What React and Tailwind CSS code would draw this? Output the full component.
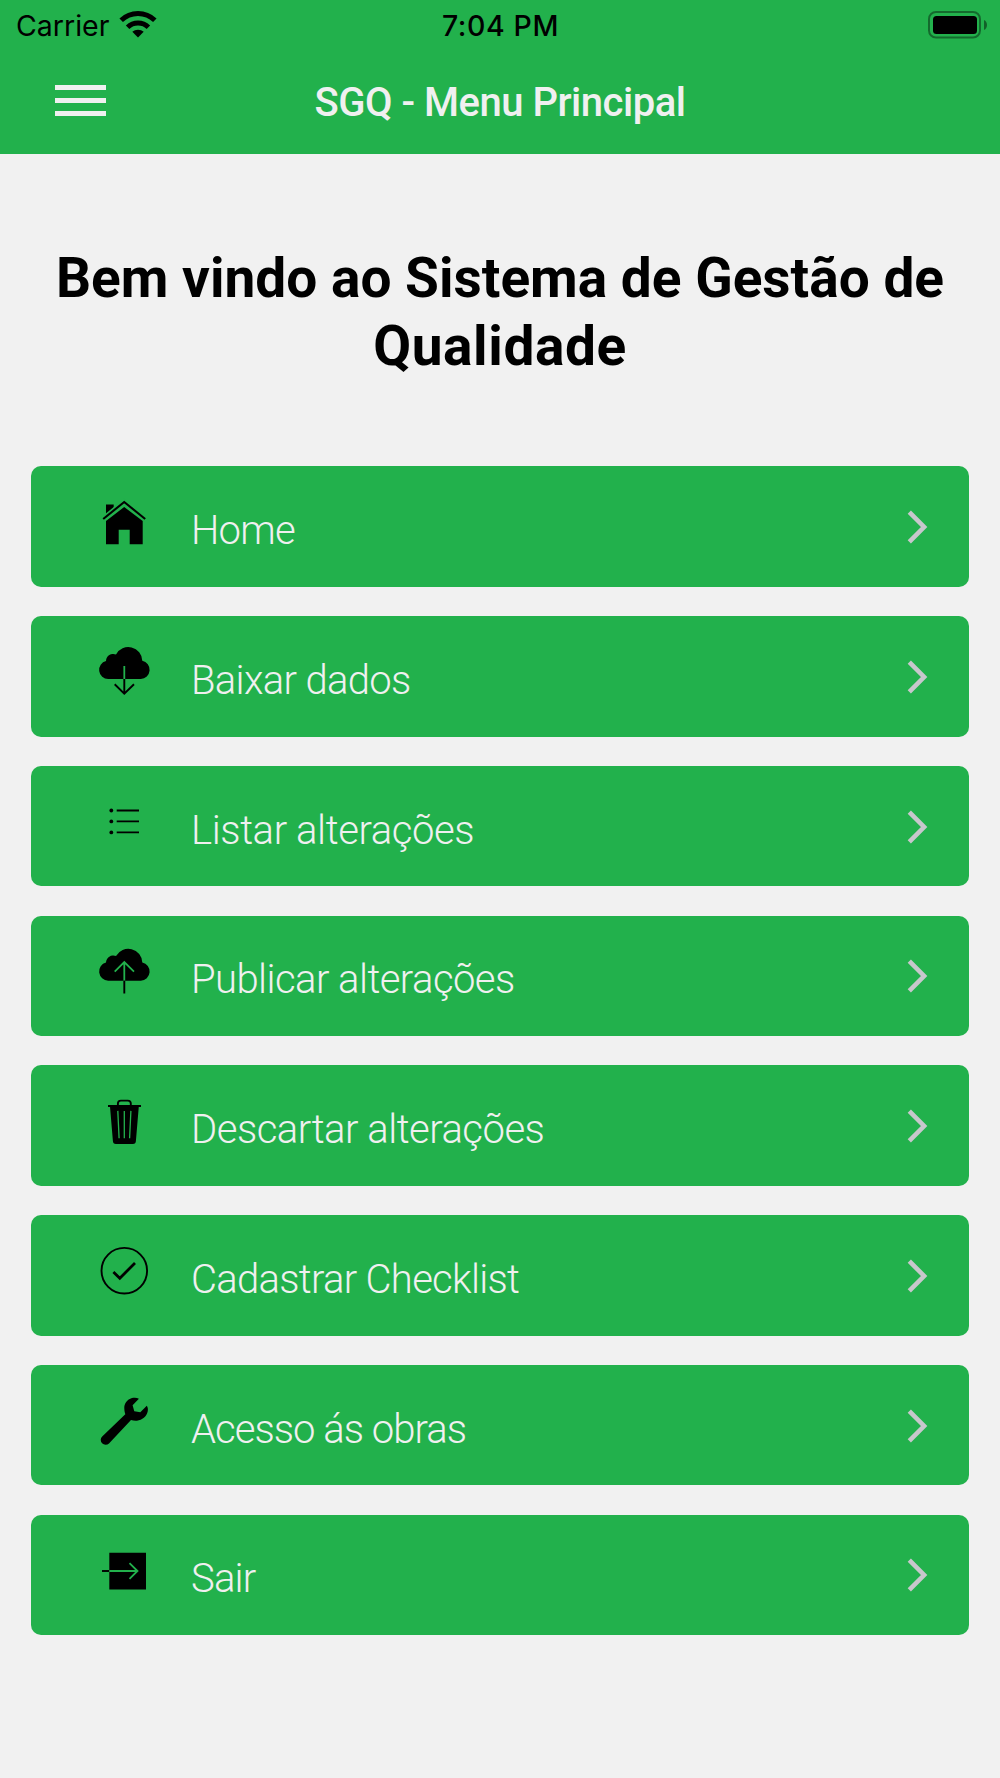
const CLOUD =
  "M14.2 35a9.2 9.2 0 0 1-2.2-18.1A7.3 7.3 0 0 1 22 10.4 14 14 0 0 1 48.3 16.8 9.2 9.2 0 0 1 46.8 35Z";

function HomeIcon() {
  return (
    <>
      <path d="M12 22V9.4h7.7v6.4Z" fill="black" />
      <path d="M9 24.3 30.2 7 51.4 24.3" fill="none" stroke="#22b14c" strokeWidth="5.5" />
      <path d="M30.2 12 48.7 26v23.3h-13V34.7h-11v14.6H12V26Z" fill="black" />
      <path d="M9.2 24 30.2 7 51.2 24" fill="none" stroke="black" strokeWidth="2.1" />
    </>
  );
}

function DownloadIcon() {
  return (
    <>
      <path d={CLOUD} fill="black" />
      <path d="M30.3 22v13" stroke="#22b14c" strokeWidth="1.8" />
      <path d="M30.3 35v14.5M20.7 40.3l9.6 9.3 9.7-9.3" fill="none" stroke="black" strokeWidth="1.9" />
    </>
  );
}

function ListIcon() {
  return (
    <>
      <circle cx="17.3" cy="16.5" r="1.9" />
      <circle cx="17.3" cy="27.4" r="1.9" />
      <circle cx="17.3" cy="38.4" r="1.9" />
      <path d="M22.7 16.5H45M22.7 27.4H45M22.7 38.4H45" stroke="black" strokeWidth="1.9" />
    </>
  );
}

function UploadIcon() {
  return (
    <>
      <path d={CLOUD} transform="translate(0 1.7)" fill="black" />
      <path d="M30.3 36.7V18M20.7 27.6l9.6-9.6 9.7 9.6" fill="none" stroke="#22b14c" strokeWidth="1.8" />
      <path d="M30.3 36.7v12.8" stroke="black" strokeWidth="1.9" />
    </>
  );
}

function TrashIcon() {
  return (
    <>
      <path d="M14 12.1H47" stroke="black" strokeWidth="2" />
      <path d="M23.9 12V9.6a3 3 0 0 1 3-3h6.9a3 3 0 0 1 3 3V12" fill="none" stroke="black" strokeWidth="1.9" />
      <path d="M16 12.5H44.8L41.9 47a3 3 0 0 1-3 2.9H21.9a3 3 0 0 1-3-2.9Z" fill="black" />
      <path d="M23.8 16.9 25.1 44.2M30.3 16.9V44.2M36.9 16.9 35.6 44.2" stroke="#22b14c" strokeWidth="1.3" />
    </>
  );
}

function CheckIcon() {
  return (
    <>
      <circle cx="30.3" cy="27.7" r="22.8" fill="none" stroke="black" strokeWidth="1.9" />
      <path d="M19.4 29 25.8 35.2 41 20" fill="none" stroke="black" strokeWidth="2.8" />
    </>
  );
}

function WrenchIcon() {
  return (
    <path
      d="M44.9 5.7C43 4.7 40.6 4.4 38 5.1 33 6.5 30 11 30.3 15.6c.1 2.3.4 3.9 1 5.6L8.2 43.4a4.8 4.8 0 0 0 6.8 7L37 27c1.8.6 3.9.9 6 .7 5.2-.5 9.6-4.3 10.7-9.2.5-2.3.1-4.3-.9-5.7L46.3 19.2 40.3 18.2 38.6 12.2Z"
      fill="black"
    />
  );
}

function ExitIcon() {
  return (
    <>
      <path d="M15.3 9.7H52V46.4H15.3Z" fill="black" />
      <path d="M8 28h7.3" stroke="black" strokeWidth="1.9" />
      <path d="M15.3 28H43.5M35.5 20.1 43.5 28 35.5 35.9" fill="none" stroke="#22b14c" strokeWidth="1.8" />
    </>
  );
}

const items = [
  { label: "Home", Icon: HomeIcon, tracking: "tracking-[-0.7px]" },
  { label: "Baixar dados", Icon: DownloadIcon, tracking: "tracking-[-0.67px]" },
  { label: "Listar alterações", Icon: ListIcon, tracking: "tracking-[-0.4px]" },
  { label: "Publicar alterações", Icon: UploadIcon, tracking: "tracking-[-0.55px]" },
  { label: "Descartar alterações", Icon: TrashIcon, tracking: "tracking-[-0.5px]" },
  { label: "Cadastrar Checklist", Icon: CheckIcon, tracking: "tracking-[-0.7px]" },
  { label: "Acesso ás obras", Icon: WrenchIcon, tracking: "tracking-[-0.97px]" },
  { label: "Sair", Icon: ExitIcon, tracking: "tracking-[-0.8px]" },
];

function StatusBar() {
  return (
    <div className="grid h-[50px] grid-cols-3 items-center pl-[16px] pr-[12px] font-['Inter',sans-serif] text-[28.5px] leading-[50px] text-black">
      <div className="flex items-center gap-[10px]">
        <span className="pt-px">Carrier</span>
        <svg className="mb-[3px] h-[28px] w-[38px]" viewBox="0 0 38 28" fill="none" stroke="black">
          <path d="M2.2 10.3C11.5 1.2 26.5 1.2 35.8 10.3" strokeWidth="5" />
          <path d="M8.6 17.2C14.4 11.6 23.6 11.6 29.4 17.2" strokeWidth="5" />
          <path d="M19 27.5 13.3 21.8C16.4 18.9 21.6 18.9 24.7 21.8Z" fill="black" stroke="none" />
        </svg>
      </div>
      <span className="pr-[3px] pt-px text-center font-medium tracking-[0.6px]">7:04 PM</span>
      <svg className="mb-px h-[28px] w-[60px] justify-self-end" viewBox="0 0 60 28">
        <rect x="1" y="1" width="51" height="25.5" rx="7" fill="none" stroke="black" strokeOpacity="0.4" strokeWidth="2" />
        <rect x="5" y="5" width="44" height="18" rx="3.5" />
        <path d="M56 9c4 1.5 4 8.500 0 10Z" fillOpacity="0.45" />
      </svg>
    </div>
  );
}

function MenuItem({ label, Icon, tracking }) {
  return (
    <li className="flex h-[120.6px] items-center rounded-[10px] bg-[#22b14c] pl-[62.6px] pr-[39.6px]">
      <svg className="mb-[4px] size-[60px] shrink-0" viewBox="0 0 60 60">
        <Icon />
      </svg>
      <span className={`grow pl-[37px] pt-[9px] text-[40px] font-light leading-[48px] text-[#f0f0f0] ${tracking}`}>
        {label}
      </span>
      <svg className="mt-px h-[36px] w-[22px] shrink-0" viewBox="0 0 22 36" fill="none">
        <path d="M2.3 3.1 17.1 18 2.3 32.9" stroke="#c7c7cc" strokeWidth="4.6" />
      </svg>
    </li>
  );
}

export default function App() {
  return (
    <div className="min-h-[1778px] bg-[#f1f1f1] font-['Roboto',sans-serif]">
      <header className="h-[154.4px] bg-[#22b14c]">
        <StatusBar />
        <div className="grid h-[100px] grid-cols-[1fr_auto_1fr] items-center">
          <button className="ml-[55.4px] mt-px flex w-[51px] flex-col gap-[8.5px]" aria-label="Menu">
            <span className="h-[4.5px] bg-[#f0f0f0]" />
            <span className="h-[4.5px] bg-[#f0f0f0]" />
            <span className="h-[4.5px] bg-[#f0f0f0]" />
          </button>
          <h1 className="pt-[6px] text-[40px] font-medium leading-[50px] tracking-[-0.5px] text-[#f0f0f0]">
            SGQ - Menu Principal
          </h1>
        </div>
      </header>

      <main className="px-[31.4px] pt-[90px]">
        <h2 className="text-center text-[55px] font-bold leading-[68px] text-black">
          Bem vindo ao Sistema de Gestão de <span className="tracking-[0.6px]">Qualidade</span>
        </h2>
        <ul className="mt-[86px] flex flex-col gap-[29.15px]">
          {items.map((item) => (
            <MenuItem key={item.label} {...item} />
          ))}
        </ul>
      </main>
    </div>
  );
}
